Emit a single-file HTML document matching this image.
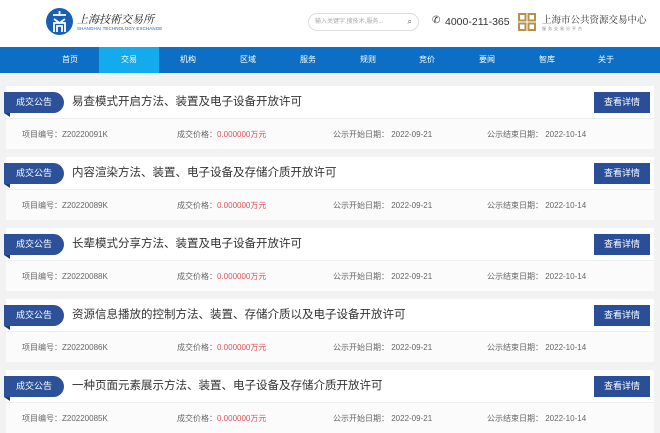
<!DOCTYPE html>
<html><head><meta charset="utf-8"><style>
*{margin:0;padding:0;box-sizing:border-box}
body{width:660px;height:432px;overflow:hidden;background:#f2f2f2;font-family:"Liberation Sans","Noto Sans CJK SC",sans-serif;position:relative}
.hd{position:absolute;left:0;top:0;width:660px;height:47px;background:#fff}
.nav{position:absolute;left:0;top:47px;width:660px;height:26px;background:#0c6ec4}
.nav span{position:absolute;top:0;width:60px;height:26px;line-height:26px;text-align:center;color:#fff;font-size:8px}
.nav .on{background:#14aaee}
.card{position:absolute;left:6px;width:648px;height:63px;background:#fff}
.card .bot{position:absolute;left:0;top:32px;width:648px;height:31px;background:#fbfbfb;border-top:1px solid #eee}
.lab{position:absolute;left:-2px;top:6px;width:60px;height:21px;background:#2c5199;border-radius:0 11px 11px 0;color:#fff;font-size:9px;line-height:21px;text-align:center}
.fold{position:absolute;left:-2px;top:27px;width:0;height:0;border-top:4px solid #1d3a72;border-left:6px solid transparent}
.tt{position:absolute;left:66px;top:8px;font-size:11.5px;color:#333;line-height:17px}
.btn{position:absolute;left:588px;top:6px;width:56px;height:21px;background:#2a4f98;color:#fff;font-size:9px;line-height:21px;text-align:center}
.m{position:absolute;top:10px;font-size:8px;color:#666;line-height:12px}
.m b{font-weight:normal;color:#e0505a}
</style></head><body>
<div class="hd">
<svg style="position:absolute;left:46px;top:8px" width="27" height="27" viewBox="0 0 27 27"><circle cx="13.5" cy="13.5" r="13.5" fill="#1a5fb4"/><path d="M13.5 3v3M7 7h13M8 11l5.5 4 5.5-4M8 24V15h11v9M11 24v-6h5v6" stroke="#fff" stroke-width="1.8" fill="none"/></svg>
<div style="position:absolute;left:77px;top:11px;font-family:'Noto Serif CJK SC',serif;font-size:11px;color:#222;letter-spacing:0;font-style:italic">上海技術交易所</div>
<div style="position:absolute;left:77px;top:26px;font-size:4.5px;color:#1a5fb4;letter-spacing:.1px">SHANGHAI TECHNOLOGY EXCHANGE</div>
<div style="position:absolute;left:308px;top:13px;width:111px;height:18px;border:1px solid #ddd;border-radius:9px;font-size:6px;color:#aaa;line-height:16px;padding-left:6px">输入关键字,搜技术,服务...<span style="position:absolute;right:6px;color:#555;font-size:8px">⌕</span></div>
<div style="position:absolute;left:432px;top:15px;font-size:10px;color:#333">✆</div>
<div style="position:absolute;left:445px;top:16px;font-size:10.5px;color:#333">4000-211-365</div>
<svg style="position:absolute;left:518px;top:13px" width="18" height="18" viewBox="0 0 18 18"><g fill="none" stroke="#b8924a" stroke-width="2"><rect x="1" y="1" width="6.5" height="6.5"/><rect x="10.5" y="1" width="6.5" height="6.5"/><rect x="1" y="10.5" width="6.5" height="6.5"/><rect x="10.5" y="10.5" width="6.5" height="6.5"/></g></svg>
<div style="position:absolute;left:542px;top:12px;font-family:'Noto Serif CJK SC',serif;font-size:9.5px;color:#333">上海市公共资源交易中心</div>
<div style="position:absolute;left:542px;top:26px;font-size:4px;color:#888;letter-spacing:2px">服务交易分平台</div>
</div>
<div class="nav">
<span style="left:40px">首页</span><span class="on" style="left:99px">交易</span><span style="left:158px">机构</span><span style="left:218px">区域</span><span style="left:278px">服务</span><span style="left:338px">规则</span><span style="left:397px">竞价</span><span style="left:457px">要闻</span><span style="left:517px">智库</span><span style="left:576px">关于</span>
</div>

<div class="card" style="top:86px"><div class="lab">成交公告</div><div class="fold"></div><div class="tt">易查模式开启方法、装置及电子设备开放许可</div><div class="btn">查看详情</div>
<div class="bot"><div class="m" style="left:16px">项目编号：Z20220091K</div><div class="m" style="left:171px">成交价格：<b>0.000000万元</b></div><div class="m" style="left:327px">公示开始日期：&nbsp;2022-09-21</div><div class="m" style="left:481px">公示结束日期：&nbsp;2022-10-14</div></div></div>

<div class="card" style="top:157px"><div class="lab">成交公告</div><div class="fold"></div><div class="tt">内容渲染方法、装置、电子设备及存储介质开放许可</div><div class="btn">查看详情</div>
<div class="bot"><div class="m" style="left:16px">项目编号：Z20220089K</div><div class="m" style="left:171px">成交价格：<b>0.000000万元</b></div><div class="m" style="left:327px">公示开始日期：&nbsp;2022-09-21</div><div class="m" style="left:481px">公示结束日期：&nbsp;2022-10-14</div></div></div>

<div class="card" style="top:228px"><div class="lab">成交公告</div><div class="fold"></div><div class="tt">长辈模式分享方法、装置及电子设备开放许可</div><div class="btn">查看详情</div>
<div class="bot"><div class="m" style="left:16px">项目编号：Z20220088K</div><div class="m" style="left:171px">成交价格：<b>0.000000万元</b></div><div class="m" style="left:327px">公示开始日期：&nbsp;2022-09-21</div><div class="m" style="left:481px">公示结束日期：&nbsp;2022-10-14</div></div></div>

<div class="card" style="top:299px"><div class="lab">成交公告</div><div class="fold"></div><div class="tt">资源信息播放的控制方法、装置、存储介质以及电子设备开放许可</div><div class="btn">查看详情</div>
<div class="bot"><div class="m" style="left:16px">项目编号：Z20220086K</div><div class="m" style="left:171px">成交价格：<b>0.000000万元</b></div><div class="m" style="left:327px">公示开始日期：&nbsp;2022-09-21</div><div class="m" style="left:481px">公示结束日期：&nbsp;2022-10-14</div></div></div>

<div class="card" style="top:370px"><div class="lab">成交公告</div><div class="fold"></div><div class="tt">一种页面元素展示方法、装置、电子设备及存储介质开放许可</div><div class="btn">查看详情</div>
<div class="bot"><div class="m" style="left:16px">项目编号：Z20220085K</div><div class="m" style="left:171px">成交价格：<b>0.000000万元</b></div><div class="m" style="left:327px">公示开始日期：&nbsp;2022-09-21</div><div class="m" style="left:481px">公示结束日期：&nbsp;2022-10-14</div></div></div>
</body></html>
